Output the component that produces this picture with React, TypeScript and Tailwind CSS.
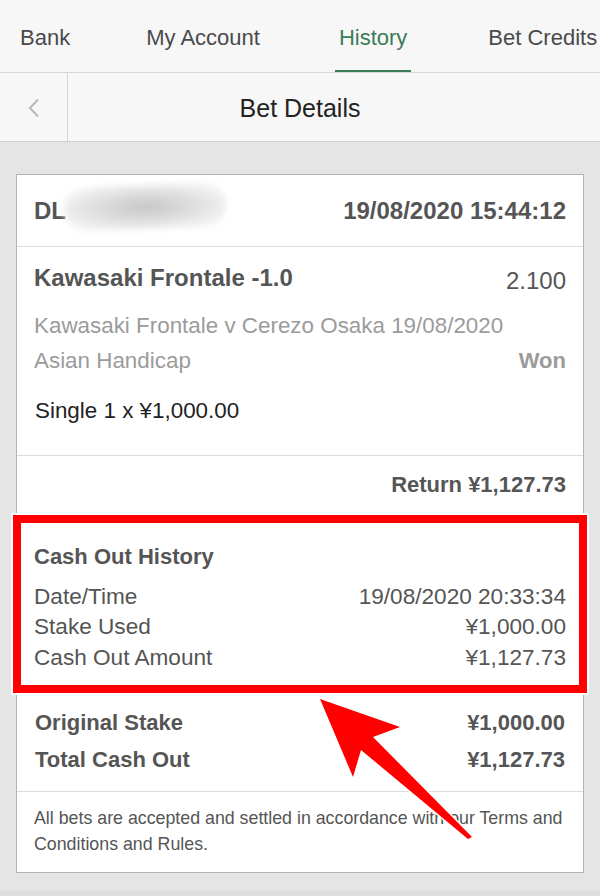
const TABS = [
  { label: 'Bank', active: false, extra: '' },
  { label: 'My Account', active: false, extra: '' },
  { label: 'History', active: true, extra: 'ml-[3px]' },
  { label: 'Bet Credits', active: false, extra: 'ml-[5px]' },
]

const CASH_OUT_ROWS = [
  { label: 'Date/Time', value: '19/08/2020 20:33:34' },
  { label: 'Stake Used', value: '¥1,000.00' },
  { label: 'Cash Out Amount', value: '¥1,127.73' },
]

export default function App() {
  return (
    <div className="relative h-[896px] w-[600px] overflow-hidden bg-[#e5e5e5] font-['Liberation_Sans',Arial,sans-serif]">
      {/* Top tabs */}
      <nav className="flex h-[73px] gap-[68px] whitespace-nowrap border-b border-[#d6d6d6] bg-[#f7f7f7] pl-[16px]">
        {TABS.map((t) => (
          <div
            key={t.label}
            className={`flex h-full shrink-0 items-center border-b-2 px-[4px] pt-[5px] text-[22px] ${t.extra} ${
              t.active ? 'border-[#3c7c58] text-[#3c7c58]' : 'border-transparent text-[#4a4a4a]'
            }`}
          >
            {t.label}
          </div>
        ))}
      </nav>

      {/* Title bar */}
      <header className="grid h-[69px] grid-cols-[68px_1fr_68px] border-b border-[#d2d2d2] bg-[#f7f7f7]">
        <div className="flex items-center justify-center border-r border-[#d6d6d6] pt-[2px]">
          <svg width="14" height="20" viewBox="0 0 14 20" fill="none">
            <polyline points="11,1.5 3,10 11,18.5" stroke="#b8b8b8" strokeWidth="2" />
          </svg>
        </div>
        <div className="flex items-center justify-center pt-[3px] text-[25px] text-[#222]">Bet Details</div>
        <div />
      </header>

      {/* Bet card */}
      <div className="mx-[16px] mt-[32px] border border-[#b3b3b3] bg-white text-[#555]">
        <div className="relative flex h-[72px] items-center justify-between border-b border-[#dcdcdc] px-[17px] text-[24px] font-bold">
          <span>DL</span>
          <span className="absolute left-[47px] top-[10px] h-[44px] w-[162px] -rotate-2 rounded-full bg-[radial-gradient(ellipse_at_center,#c6c6c6_0%,#dcdcdc_40%,#eeeeee_70%,#f8f8f8_90%)] blur-[3px]" />
          <span>19/08/2020 15:44:12</span>
        </div>

        <div className="border-b border-[#dcdcdc] px-[17px] pb-[29px] pt-[16px]">
          <div className="flex items-start justify-between leading-[30px]">
            <span className="text-[24px] font-bold">Kawasaki Frontale -1.0</span>
            <span className="mt-[3px] text-[24px]">2.100</span>
          </div>
          <div className="mt-[12px] text-[22.4px] leading-[35px] text-[#9b9b9b]">
            <div>Kawasaki Frontale v Cerezo Osaka 19/08/2020</div>
            <div className="flex justify-between">
              <span>Asian Handicap</span>
              <span className="text-[22px] font-bold">Won</span>
            </div>
          </div>
          <div className="mt-[18px] pl-[1px] text-[22.4px] leading-[30px] text-[#222]">Single 1 x ¥1,000.00</div>
        </div>

        <div className="flex justify-end border-b border-[#dcdcdc] px-[17px] pb-[15px] pt-[14px] text-[22px] font-bold leading-[30px]">
          Return ¥1,127.73
        </div>

        <div className="px-[17px] pt-[26px] text-[22.6px] leading-[30.5px]">
          <div className="text-[22px] font-bold">Cash Out History</div>
          <div className="mt-[9px]">
            {CASH_OUT_ROWS.map((r) => (
              <div key={r.label} className="flex justify-between">
                <span>{r.label}</span>
                <span>{r.value}</span>
              </div>
            ))}
          </div>
        </div>

        <div className="border-b border-[#dcdcdc] px-[18px] pb-[13px] pt-[31px] text-[22px] font-bold leading-[37px]">
          <div className="flex justify-between">
            <span>Original Stake</span>
            <span>¥1,000.00</span>
          </div>
          <div className="flex justify-between">
            <span>Total Cash Out</span>
            <span>¥1,127.73</span>
          </div>
        </div>

        <p className="px-[17px] pb-[15px] pt-[13px] text-[17.8px] leading-[26px] text-[#555]">
          All bets are accepted and settled in accordance with our Terms and Conditions and Rules.
        </p>
      </div>

      <div className="mt-[17px] h-[10px] bg-[#dedede]" />

      {/* Annotation: red highlight box */}
      <div className="absolute left-[13px] top-[515px] h-[178px] w-[574px] border-[8px] border-[#ff0000] shadow-[0_0_0_2px_#ffffff]" />

      {/* Annotation: arrow */}
      <svg className="absolute left-[300px] top-[680px]" width="200" height="170" viewBox="0 0 200 170">
        <polygon
          points="20,19 100,47 73,57 172,157 168,159 61,70 53,97"
          fill="#ff0000"
          stroke="#ffffff"
          strokeWidth="3"
          strokeLinejoin="round"
          paintOrder="stroke"
        />
      </svg>
    </div>
  )
}
